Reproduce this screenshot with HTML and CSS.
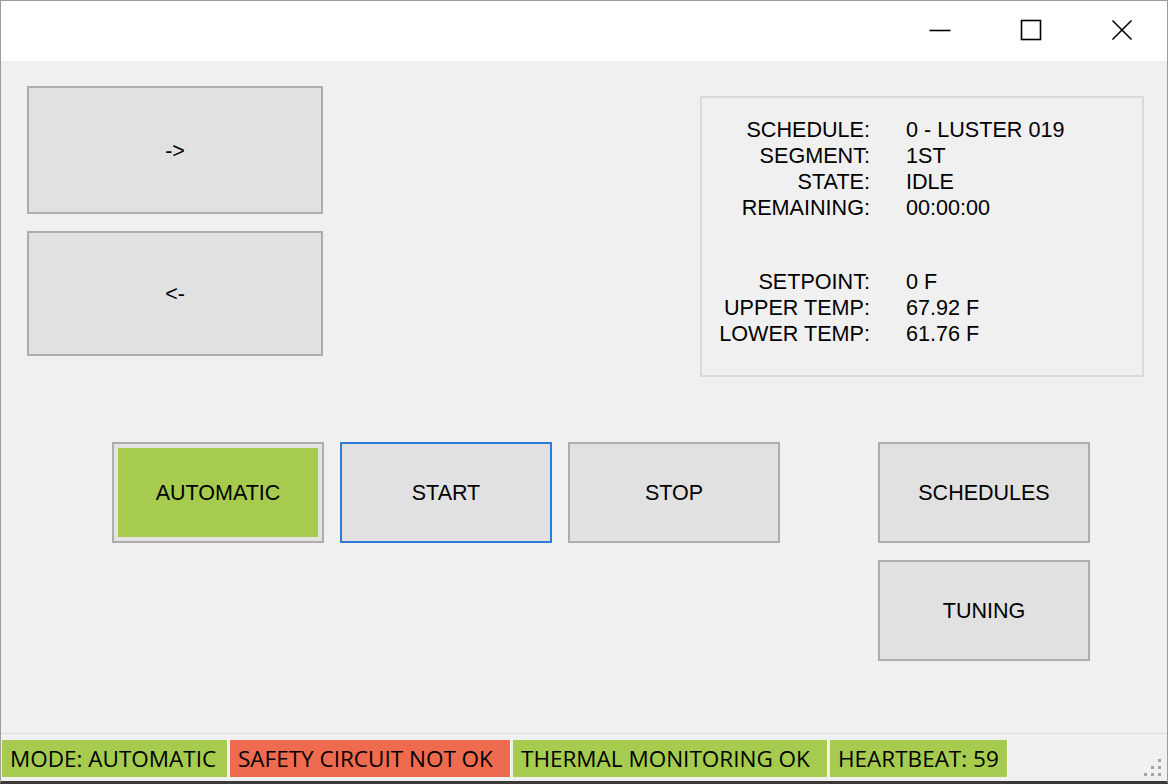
FILE: index.html
```html
<!DOCTYPE html>
<html lang="en">
<head>
<meta charset="utf-8">
<title>Kiln Controller</title>
<link rel="stylesheet" href="styles.css">
</head>
<body>
<div class="window">
  <header class="titlebar">
    <div class="caption-btn">
      <svg width="22" height="22" viewBox="0 0 22 22"><line x1="0.5" y1="11.5" x2="21.5" y2="11.5" stroke="#000" stroke-width="1.6"/></svg>
    </div>
    <div class="caption-btn">
      <svg width="22" height="22" viewBox="0 0 22 22"><rect x="1.5" y="1.5" width="19" height="19" fill="none" stroke="#000" stroke-width="1.6"/></svg>
    </div>
    <div class="caption-btn">
      <svg width="22" height="22" viewBox="0 0 22 22"><path d="M1.5 1.5 L20.5 20.5 M20.5 1.5 L1.5 20.5" stroke="#000" stroke-width="1.6" fill="none"/></svg>
    </div>
  </header>

  <main class="client">
    <section class="top-row">
      <div class="nav-col">
        <button class="btn btn-nav btn-next">-&gt;</button>
        <button class="btn btn-nav btn-prev">&lt;-</button>
      </div>
      <div class="info-panel">
        <div class="info-grid">
          <span class="lbl">SCHEDULE:</span><span class="val">0 - LUSTER 019</span>
          <span class="lbl">SEGMENT:</span><span class="val">1ST</span>
          <span class="lbl">STATE:</span><span class="val">IDLE</span>
          <span class="lbl">REMAINING:</span><span class="val">00:00:00</span>
        </div>
        <div class="info-grid info-grid-temps">
          <span class="lbl">SETPOINT:</span><span class="val">0 F</span>
          <span class="lbl">UPPER TEMP:</span><span class="val">67.92 F</span>
          <span class="lbl">LOWER TEMP:</span><span class="val">61.76 F</span>
        </div>
      </div>
    </section>

    <section class="bottom-row">
      <button class="btn btn-action btn-auto">AUTOMATIC</button>
      <button class="btn btn-action btn-focus">START</button>
      <button class="btn btn-action">STOP</button>
      <div class="side-col">
        <button class="btn btn-action">SCHEDULES</button>
        <button class="btn btn-action">TUNING</button>
      </div>
    </section>
  </main>

  <footer class="statusbar">
    <span class="panel panel-ok panel-mode">MODE: AUTOMATIC</span>
    <span class="panel panel-bad panel-safety">SAFETY CIRCUIT NOT OK</span>
    <span class="panel panel-ok panel-thermal">THERMAL MONITORING OK</span>
    <span class="panel panel-ok panel-heart">HEARTBEAT: 59</span>
    <span class="grip">
      <i class="d d1"></i><i class="d d2"></i><i class="d d3"></i>
      <i class="d d4"></i><i class="d d5"></i><i class="d d6"></i>
    </span>
  </footer>
</div>
</body>
</html>
```

FILE: styles.css
```css
* { box-sizing: border-box; }

html, body {
  margin: 0;
  padding: 0;
  background: #f0f0f0;
}

.window {
  width: 1168px;
  height: 784px;
  display: flex;
  flex-direction: column;
  background: #f0f0f0;
  border-top: 1px solid #9c9c9c;
  border-left: 1px solid #9c9c9c;
  border-right: 1px solid #9c9c9c;
  border-bottom: 3px solid #3a3a3a;
  font-family: "Liberation Sans", Arial, sans-serif;
  color: #000;
  position: relative;
  overflow: hidden;
}

/* Title bar */
.titlebar {
  height: 60px;
  flex: 0 0 60px;
  background: #fff;
  display: flex;
  justify-content: flex-end;
  align-items: flex-start;
}

.caption-btn {
  width: 91px;
  height: 57px;
  display: flex;
  align-items: center;
  justify-content: center;
}

.caption-btn svg { display: block; }

/* Client area */
.client {
  flex: 1 1 auto;
  display: flex;
  flex-direction: column;
}

.top-row {
  display: flex;
  justify-content: space-between;
  align-items: flex-start;
  padding: 25px 23px 0 26px;
}

.nav-col {
  display: flex;
  flex-direction: column;
  gap: 17px;
}

.btn {
  font-family: "Liberation Sans", Arial, sans-serif;
  font-size: 21.5px;
  color: #000;
  background: #e1e1e1;
  border: 2px solid #adadad;
  padding: 2px 0 0 0;
  margin: 0;
  display: flex;
  align-items: center;
  justify-content: center;
}

.btn-nav { width: 296px; }
.btn-next { height: 128px; }
.btn-prev { height: 125px; }

.info-panel {
  width: 444px;
  height: 281px;
  margin-top: 10px;
  border: 2px solid #dadada;
  padding-top: 19px;
}

.info-grid {
  display: grid;
  grid-template-columns: 168px auto;
  column-gap: 36px;
  font-size: 21.6px;
  line-height: 26px;
}

.info-grid-temps { margin-top: 48px; }

.lbl { text-align: right; }
.val { text-align: left; }

/* Bottom row */
.bottom-row {
  display: flex;
  align-items: flex-start;
  gap: 16px;
  padding-left: 111px;
  margin-top: 65px;
}

.btn-action {
  width: 212px;
  height: 101px;
}

.btn-auto {
  background: #a6cb4e;
  box-shadow: inset 0 0 0 4px #e3e3e3;
}

.btn-focus {
  border-color: #2f7bd9;
}

.side-col {
  display: flex;
  flex-direction: column;
  gap: 17px;
  margin-left: 82px;
}

/* Status bar */
.statusbar {
  flex: 0 0 48px;
  height: 48px;
  border-top: 1px solid #dcdcdc;
  padding: 6px 0 4px 1px;
  display: flex;
  align-items: stretch;
  gap: 2px;
  position: relative;
  background: #f0f0f0;
}

.panel {
  height: 37px;
  display: flex;
  align-items: center;
  padding-left: 8px;
  font-family: "Open Sans", "Noto Sans", sans-serif;
  font-size: 22.5px;
  letter-spacing: 0;
  color: #000;
  white-space: nowrap;
  overflow: hidden;
  border-right: 1px solid #ffffff;
}

.panel-ok { background: #a6cb4e; }
.panel-bad { background: #ef6b50; }

.panel-mode { width: 226px; }
.panel-safety { width: 281px; }
.panel-thermal { width: 315px; }
.panel-heart { width: 178px; }

/* Resize grip overlay */
.grip {
  position: absolute;
  right: 4px;
  bottom: 3px;
  width: 20px;
  height: 20px;
}

.d {
  position: absolute;
  width: 3px;
  height: 3px;
  background: #a3a3a3;
}
.d1 { right: 2px; top: 1px; }
.d2 { right: 2px; top: 8px; }
.d3 { right: 9px; top: 8px; }
.d4 { right: 2px; top: 15px; }
.d5 { right: 9px; top: 15px; }
.d6 { right: 16px; top: 15px; }
```
